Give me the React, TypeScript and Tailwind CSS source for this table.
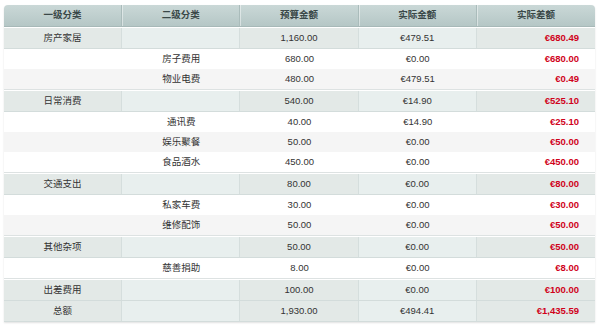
type Row = {
  kind: 'cat' | 'sub' | 'total';
  a?: string;
  b?: string;
  budget: string;
  actual: string;
  diff: string;
};

const rows: Row[] = [
  { kind: 'cat', a: '房产家居', budget: '1,160.00', actual: '€479.51', diff: '€680.49' },
  { kind: 'sub', b: '房子费用', budget: '680.00', actual: '€0.00', diff: '€680.00' },
  { kind: 'sub', b: '物业电费', budget: '480.00', actual: '€479.51', diff: '€0.49' },
  { kind: 'cat', a: '日常消费', budget: '540.00', actual: '€14.90', diff: '€525.10' },
  { kind: 'sub', b: '通讯费', budget: '40.00', actual: '€14.90', diff: '€25.10' },
  { kind: 'sub', b: '娱乐聚餐', budget: '50.00', actual: '€0.00', diff: '€50.00' },
  { kind: 'sub', b: '食品酒水', budget: '450.00', actual: '€0.00', diff: '€450.00' },
  { kind: 'cat', a: '交通支出', budget: '80.00', actual: '€0.00', diff: '€80.00' },
  { kind: 'sub', b: '私家车费', budget: '30.00', actual: '€0.00', diff: '€30.00' },
  { kind: 'sub', b: '维修配饰', budget: '50.00', actual: '€0.00', diff: '€50.00' },
  { kind: 'cat', a: '其他杂项', budget: '50.00', actual: '€0.00', diff: '€50.00' },
  { kind: 'sub', b: '慈善捐助', budget: '8.00', actual: '€0.00', diff: '€8.00' },
  { kind: 'cat', a: '出差费用', budget: '100.00', actual: '€0.00', diff: '€100.00' },
  { kind: 'total', a: '总额', budget: '1,930.00', actual: '€494.41', diff: '€1,435.59' },
];

const headers = ['一级分类', '二级分类', '预算金额', '实际金额', '实际差额'];

function GroupRow({ row, first }: { row: Row; first: boolean }) {
  const dark = 'bg-[#e3e9e7]';
  const light = 'bg-[#e8efee]';
  const cell = 'flex items-center border-r border-[#d5dedd]';
  return (
    <div className={first || row.kind === 'total' ? '' : 'border-t border-[#dde2e2] bg-white pt-[1px]'}>
      <div className="grid grid-cols-5 h-[21px] border-b border-[#d3dcdb]">
        <div className={`${cell} ${dark} justify-center`}>{row.a}</div>
        <div className={`${cell} ${light}`} />
        <div className={`${cell} ${dark} justify-center`}>{row.budget}</div>
        <div className={`${cell} ${light} justify-center`}>{row.actual}</div>
        <div className={`flex items-center justify-end pr-[16px] ${dark} font-bold text-[#d0021b]`}>{row.diff}</div>
      </div>
    </div>
  );
}

function SubRow({ row, odd }: { row: Row; odd: boolean }) {
  return (
    <div className={`grid grid-cols-5 h-[20px] ${odd ? 'bg-[#f5f5f5]' : 'bg-white'}`}>
      <div />
      <div className="flex items-center justify-center">{row.b}</div>
      <div className="flex items-center justify-center">{row.budget}</div>
      <div className="flex items-center justify-center">{row.actual}</div>
      <div className="flex items-center justify-end pr-[16px] font-bold text-[#d0021b]">{row.diff}</div>
    </div>
  );
}

export default function App() {
  let subIndex = 0;
  return (
    <div
      className="w-[600px] h-[326px] bg-white pt-[5px] pl-[4px]"
      style={{ fontFamily: '"Liberation Sans", "Noto Sans CJK SC", sans-serif' }}
    >
      <div className="w-[591px] text-[9.5px] text-[#333] rounded-t-[4px] shadow-[0_1px_2px_rgba(0,0,0,0.12)]">
        {/* Header */}
        <div className="grid grid-cols-5 h-[22px] rounded-t-[4px] bg-gradient-to-b from-[#cad8d7] to-[#b5c7c6] border-b border-[#a7b9b8] overflow-hidden">
          {headers.map((h, i) => (
            <div
              key={h}
              className={`flex items-center justify-center font-bold text-[#3a4848] ${
                i < 4 ? 'border-r border-[#aabcbb]' : ''
              } ${i > 0 ? 'shadow-[inset_1px_0_0_rgba(255,255,255,0.45)]' : ''}`}
            >
              {h}
            </div>
          ))}
        </div>
        <div className="h-[1px] bg-white" />

        {rows.map((row, i) => {
          if (row.kind === 'sub') {
            const odd = subIndex % 2 === 1;
            subIndex++;
            return <SubRow key={i} row={row} odd={odd} />;
          }
          subIndex = 0;
          return <GroupRow key={i} row={row} first={i === 0} />;
        })}
      </div>
    </div>
  );
}
